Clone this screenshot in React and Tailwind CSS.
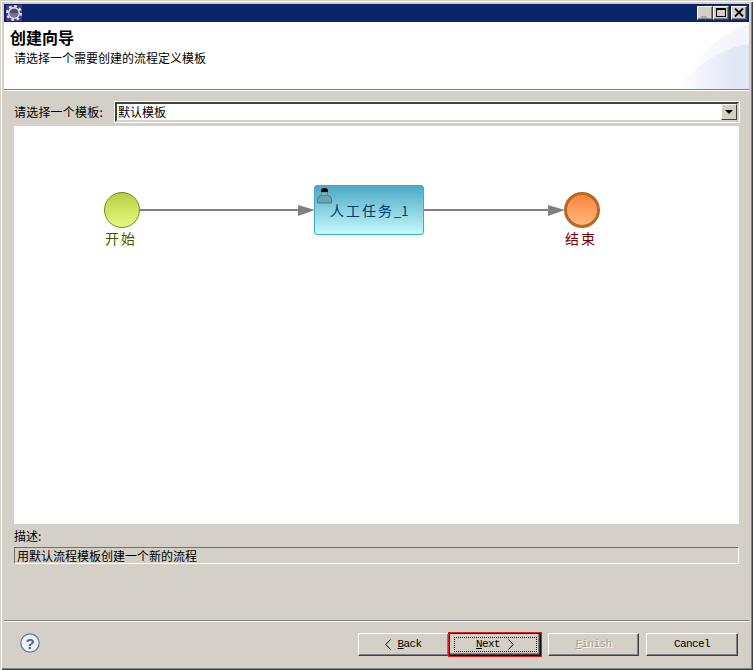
import React from "react";

const cjk = "font-['Noto_Sans_CJK_SC','Noto_Sans_CJK_JP',sans-serif]";
const mono = "font-['Liberation_Mono',monospace]";

function WinButton({ children, className = "" }) {
  return (
    <div
      className={`w-[16px] h-[14px] bg-[#d4d0c8] relative border border-t-white border-l-white border-r-[#404040] border-b-[#404040] shadow-[inset_-1px_-1px_0_#808080] ${className}`}
    >
      {children}
    </div>
  );
}

function TitleBar() {
  return (
    <div className="h-[18px] bg-[#0a246a] flex items-center justify-between pl-[2px] pr-[2px] shrink-0">
      <svg width="16" height="16" viewBox="0 0 16 16">
        <rect width="16" height="16" fill="#4b3a8c" />
        <circle cx="8" cy="8" r="7" fill="none" stroke="#e4e4e4" strokeWidth="2" strokeDasharray="2.75 2.75" />
        <circle cx="8" cy="8" r="6" fill="#ececec" />
        <circle cx="8" cy="8" r="4.6" fill="#4f4d6b" />
        <path d="M3.6 8 A4.4 4.4 0 0 0 12.4 8 Z" fill="#75738d" />
      </svg>
      <div className="flex items-center">
        <WinButton>
          <div className="absolute left-[3px] bottom-[1px] w-[6px] h-[2px] bg-[#a8a8a8]" />
        </WinButton>
        <WinButton>
          <div className="absolute left-[2px] top-[1px] w-[10px] h-[9px] border border-t-2 border-black" />
        </WinButton>
        <WinButton className="ml-[2px]">
          <svg className="absolute left-[2px] top-[1px]" width="10" height="9" viewBox="0 0 10 9">
            <path d="M1 0.5 L9 8.5 M9 0.5 L1 8.5" stroke="#000" strokeWidth="1.8" />
          </svg>
        </WinButton>
      </div>
    </div>
  );
}

function Header() {
  return (
    <div className="h-[67px] bg-white relative overflow-hidden shrink-0">
      <svg className="absolute right-0 top-0" width="72" height="67" viewBox="0 0 72 67">
        <defs>
          <linearGradient id="hdr" x1="0" y1="0.5" x2="1" y2="0.5">
            <stop offset="0" stopColor="#ffffff" />
            <stop offset="0.75" stopColor="#e2e8f6" />
            <stop offset="1" stopColor="#dfe6f5" />
          </linearGradient>
        </defs>
        <path d="M0 67 C14 40 40 12 72 2 V67 Z" fill="url(#hdr)" opacity="0.4" />
        <path d="M0 67 C20 42 44 26 72 22 V67 Z" fill="url(#hdr)" />
      </svg>
      <div className={`absolute left-[6px] top-[6px] text-[16px] leading-[18px] font-bold text-black ${cjk}`}>创建向导</div>
      <div className={`absolute left-[10px] top-[27px] text-[12px] leading-[18px] text-black ${cjk}`}>
        请选择一个需要创建的流程定义模板
      </div>
    </div>
  );
}

function Diagram() {
  return (
    <div className="relative mt-[3px] h-[398px] mx-[10px] bg-white shrink-0 overflow-hidden">
      <svg className="absolute inset-0" width="725" height="398" viewBox="0 0 725 398">
        <defs>
          <linearGradient id="start" x1="0" y1="0" x2="0" y2="1">
            <stop offset="0" stopColor="#b5cf42" />
            <stop offset="1" stopColor="#e6fb80" />
          </linearGradient>
          <linearGradient id="end" x1="0" y1="0" x2="0" y2="1">
            <stop offset="0" stopColor="#ff803c" />
            <stop offset="1" stopColor="#ffbc80" />
          </linearGradient>
        </defs>
        <rect x="126" y="83" width="160" height="2" fill="#808080" />
        <path d="M284 79 L301 84 L284 90 Z" fill="#808080" />
        <rect x="410" y="83" width="126" height="2" fill="#808080" />
        <path d="M534 79 L551 84 L534 90 Z" fill="#808080" />
        <circle cx="108" cy="84" r="17.5" fill="url(#start)" stroke="#6f8a2a" strokeWidth="1" />
        <circle cx="568" cy="84" r="16.5" fill="url(#end)" stroke="#b36a22" strokeWidth="3" />
      </svg>
      <div className="absolute left-[300px] top-[59px] w-[110px] h-[50px] rounded-[3px] border border-[#3fa9d0] bg-gradient-to-b from-[#4aa8c6] to-[#c4fafa]">
        <svg className="absolute left-[1px] top-[1px]" width="17" height="17" viewBox="0 0 17 17">
          <path d="M1.5 16 V12 Q1.5 9 5 8.5 H12 Q15.5 9 15.5 12 V16 Z" fill="#68a3ae" stroke="#4a7f8c" strokeWidth="1" />
          <path d="M5.5 5 V8.5 H11.5 V5 Z" fill="#7db4bc" stroke="#4a7f8c" strokeWidth="0.8" />
          <path d="M5 5 V4 Q5 1 8.5 1 Q12 1 12 4 V5 Z" fill="#000" />
        </svg>
        <div className={`absolute left-[15px] top-[14px] text-[14px] leading-[20px] text-[#003a70] whitespace-nowrap ${cjk}`}>
          <span className="tracking-[2px]">人工任务</span>
          <span className="text-[13px]">_1</span>
        </div>
      </div>
      <div className={`absolute left-[91px] top-[103px] text-[14px] leading-[18px] tracking-[2px] text-[#3f5a00] whitespace-nowrap ${cjk}`}>开始</div>
      <div className={`absolute left-[551px] top-[103px] text-[14px] leading-[18px] tracking-[2px] text-[#7a0000] whitespace-nowrap ${cjk}`}>结束</div>
    </div>
  );
}

function WizButton({ label, under, arrow, disabled, focused, className = "" }) {
  const text = disabled ? "text-[#a0a0a0] [text-shadow:1px_1px_0_#ffffff]" : "text-black";
  return (
    <div
      className={`h-[23px] flex items-center justify-center bg-[#d4d0c8] text-[11px] tracking-[-0.6px] leading-none ${mono} ${text} ${className} ${
        focused
          ? "border border-black outline outline-1 outline-[#e01c1c] shadow-[inset_-1px_-1px_0_#404040,inset_-2px_-2px_0_#808080]"
          : "border border-t-white border-l-white border-r-[#404040] border-b-[#404040] shadow-[inset_-1px_-1px_0_#808080]"
      }`}
    >
      <div
        className={`flex items-center justify-center ${focused ? "gap-[8px]" : "gap-[6px]"} ${
          focused ? "w-[83px] h-[15px] border border-dotted border-black" : ""
        }`}
      >
        {arrow === "left" && (
          <svg width="6" height="11" viewBox="0 0 6 11">
            <path d="M5.5 0.5 L0.8 5.5 L5.5 10.5" fill="none" stroke="#000" strokeWidth="1" />
          </svg>
        )}
        <span>
          <span className="underline">{under}</span>
          {label}
        </span>
        {arrow === "right" && (
          <svg width="6" height="11" viewBox="0 0 6 11">
            <path d="M0.5 0.5 L5.2 5.5 L0.5 10.5" fill="none" stroke="#000" strokeWidth="1" />
          </svg>
        )}
      </div>
    </div>
  );
}

export default function App() {
  return (
    <div className="w-[753px] h-[670px] bg-[#d4d0c8] flex flex-col pt-[3px] pl-[3px] pr-[4px] border-l border-t border-t-[#d4d0c8] border-l-[#d4d0c8] shadow-[inset_1px_1px_0_#ffffff,inset_-1px_-1px_0_#404040,inset_-2px_-2px_0_#808080] overflow-hidden">
      <TitleBar />
      <Header />
      <div className="h-[2px] bg-[#808080] border-b border-b-white shrink-0" />

      {/* template picker */}
      <div className="h-[23px] mt-[9px] flex items-center pl-[10px] pr-[10px] shrink-0">
        <div className={`w-[101px] text-[12px] leading-none text-black tracking-[0.2px] ${cjk}`}>请选择一个模板:</div>
        <div className="flex-1 h-[20px] bg-white flex items-center justify-between border-2 border-t-[#404040] border-l-[#404040] border-r-[#d4d0c8] border-b-[#d4d0c8] outline outline-1 outline-white">
          <span className={`pl-[1px] text-[12px] leading-none text-black ${cjk}`}>默认模板</span>
          <div className="w-[16px] h-[16px] bg-[#d4d0c8] flex items-center justify-center border border-t-white border-l-white border-r-[#404040] border-b-[#404040]">
            <div className="w-0 h-0 border-x-[4px] border-x-transparent border-t-[4px] border-t-black" />
          </div>
        </div>
      </div>

      <Diagram />

      {/* description */}
      <div className={`pl-[10px] mt-[3px] text-[12px] leading-[18px] text-black shrink-0 ${cjk}`}>描述:</div>
      <div className={`mx-[10px] mt-[2px] h-[17px] pl-[2px] flex items-center bg-[#d4d0c8] border border-t-[#707070] border-l-[#707070] border-r-white border-b-white text-[12px] leading-none text-black shrink-0 ${cjk}`}>
        用默认流程模板创建一个新的流程
      </div>

      <div className="flex-1" />
      <div className="h-[2px] bg-[#808080] border-b border-b-white shrink-0" />

      {/* footer */}
      <div className="h-[48px] flex items-start justify-between pt-[11px] pl-[16px] pr-[11px] shrink-0">
        <svg width="20" height="20" viewBox="0 0 20 20">
          <circle cx="10" cy="10" r="9.2" fill="#eef2f8" stroke="#5f7fa8" strokeWidth="1.3" />
          <text x="10" y="15.5" textAnchor="middle" fontSize="15" fontWeight="700" fontFamily="Liberation Sans" fill="#4f648c">?</text>
        </svg>
        <div className="flex items-center">
          <WizButton under="B" label="ack" arrow="left" className="w-[91px]" />
          <WizButton under="N" label="ext" arrow="right" focused className="w-[92px]" />
          <WizButton under="F" label="inish" disabled className="w-[91px] ml-[7px]" />
          <WizButton under="" label="Cancel" className="w-[92px] ml-[7px]" />
        </div>
      </div>
    </div>
  );
}
